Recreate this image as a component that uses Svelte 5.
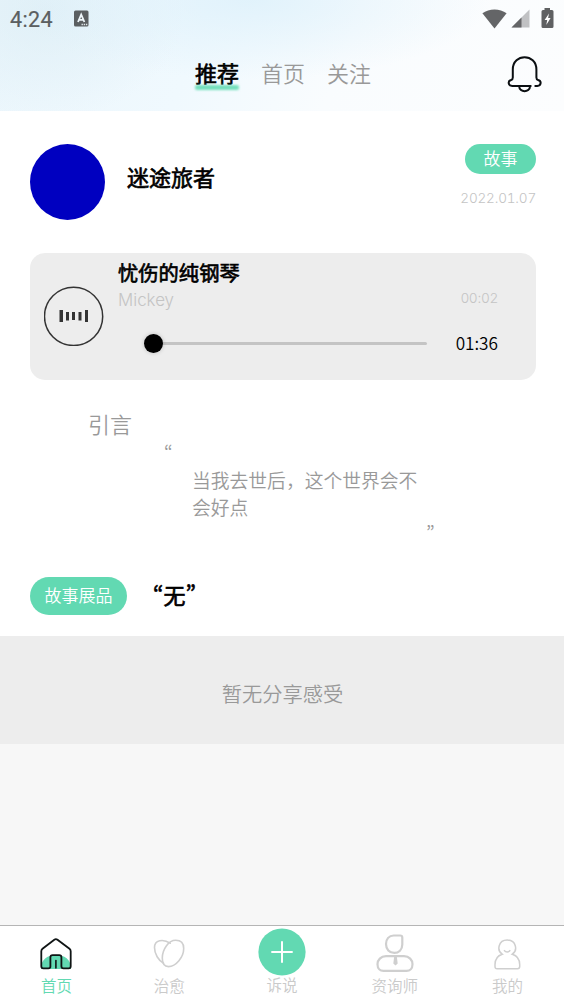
<script>
	// Header tabs
	const tabs = ["推荐", "首页", "关注"];
	let activeTab = "推荐";

	// Bottom navigation
	const navItems = [
		{ id: "home", label: "首页" },
		{ id: "heal", label: "治愈" },
		{ id: "tell", label: "诉说" },
		{ id: "adviser", label: "资询师" },
		{ id: "mine", label: "我的" },
	];
	let activeNav = "home";

	// Story shown on the page
	const story = {
		author: "迷途旅者",
		tag: "故事",
		date: "2022.01.07",
		intro: "当我去世后，这个世界会不会好点",
		exhibit: "无",
	};

	const song = {
		title: "忧伤的纯钢琴",
		artist: "Mickey",
		current: "00:02",
		total: "01:36",
	};
	let progress = 0;
</script>

<main>
	<header>
		<div class="status">
			<span class="clock">4:24</span>
			<svg class="ime" width="15" height="17" viewBox="0 0 15 17">
				<rect x="0" y="0.5" width="14.5" height="16" rx="1.5" fill="#5b5f61" />
				<path d="M4 12 L7.2 4.6 L10.4 12 M5 9.8 H9.4" fill="none" stroke="#eef6fa" stroke-width="1.8" />
				<path d="M7.5 14.5 H13.5" stroke="#dfe7ea" stroke-width="1.4" stroke-dasharray="1.4 0.8" />
			</svg>
			<div class="signals">
				<svg width="25" height="20" viewBox="0 0 25 20">
					<path d="M0.4 4.2 C7 -0.9 18 -0.9 24.6 4.2 L12.5 19.4 Z" fill="#646567" />
				</svg>
				<svg width="19" height="19" viewBox="0 0 19 19">
					<path d="M0.5 18.5 L18.5 0.5 V18.5 Z" fill="#c0c1c3" />
					<path d="M0.5 18.5 L10.5 8.5 V18.5 Z" fill="#646567" />
				</svg>
				<svg class="battery" width="13" height="20" viewBox="0 0 13 20">
					<path d="M3.5 0 H9 V2 H11 Q12.5 2 12.5 3.5 V18.5 Q12.5 20 11 20 H2 Q0.5 20 0.5 18.5 V3.5 Q0.5 2 2 2 H3.5 Z" fill="#5f6062" />
					<path d="M8 5.5 L3.6 12 H6.2 L5.3 17 L9.6 10 H7.1 Z" fill="#fff" />
				</svg>
			</div>
		</div>
		<div class="topbar">
			<nav class="tabs">
				{#each tabs as tab}
					<button class="tab" class:active={tab === activeTab} on:click={() => (activeTab = tab)}>{tab}</button>
				{/each}
			</nav>
			<svg class="bell" width="36" height="38" viewBox="0 0 36 38" fill="none" stroke="#0b0f12" stroke-width="2" stroke-linecap="round">
				<path d="M23.7 31 H5.2 C0.8 31 0.6 25.6 4.2 24.9 C5.6 24.6 5.8 23.6 5.8 22.4 V14.5 C5.8 -2 29.4 -2 29.4 14.5 V22.4 C29.4 23.6 29.6 24.6 31 24.9 C34.9 25.8 34.3 30.8 30.3 31 H28.3" />
				<path d="M12.2 31.4 C12.4 37.8 22.8 37.8 23 31.4" />
			</svg>
		</div>
	</header>

	<section class="author">
		<div class="avatar"></div>
		<h1>{story.author}</h1>
		<div class="meta">
			<span class="tag">{story.tag}</span>
			<span class="date">{story.date}</span>
		</div>
	</section>

	<section class="music">
		<div class="player">
			<svg class="play" width="60" height="60" viewBox="0 0 60 60">
				<circle cx="29.6" cy="30.4" r="29.1" fill="none" stroke="#333" stroke-width="1.5" />
				<g fill="#333">
					<rect x="15.5" y="24" width="3.5" height="12" />
					<rect x="22" y="26" width="3" height="8.5" />
					<rect x="28" y="26" width="3" height="8" />
					<rect x="34.5" y="26" width="3" height="8.5" />
					<rect x="41" y="24" width="3" height="12" />
				</g>
			</svg>
			<div class="track">
				<h2>{song.title}</h2>
				<div class="line">
					<span class="artist">{song.artist}</span>
					<span class="current">{song.current}</span>
				</div>
				<div class="line seek">
					<div class="slider">
						<div class="knob" style="left: {progress}%"></div>
					</div>
					<span class="total">{song.total}</span>
				</div>
			</div>
		</div>
	</section>

	<section class="intro">
		<h3>引言</h3>
		<div class="quote open">“</div>
		<p>{story.intro}</p>
		<div class="quote close">”</div>
	</section>

	<section class="exhibit">
		<span class="badge">故事展品</span>
		<strong>“{story.exhibit}”</strong>
	</section>

	<section class="empty">暂无分享感受</section>

	<footer>
		{#each navItems as item}
			<button class="item {item.id}" class:active={item.id === activeNav} on:click={() => (activeNav = item.id)}>
				<span class="icon">
					{#if item.id === "home"}
						<svg width="34" height="34" viewBox="0 0 34 34">
							<path d="M2 32 C1 13 33 13 32 32 Z" fill="#62d9b2" />
							<path d="M11.4 29.5 V20.3 Q11.4 18.1 13.6 18.1 H20.2 Q22.4 18.1 22.4 20.3 V29.2 Q22.4 31.3 24.5 31.3 H29.6 Q31.7 31.3 31.7 29.2 V14.3 Q31.7 12.8 30.5 11.8 L18.5 2.7 Q16.9 1.5 15.3 2.7 L3.5 11.8 Q2.3 12.8 2.3 14.3 V29.2 Q2.3 31.3 4.4 31.3 H9.3 Q11.4 31.3 11.4 29.5" fill="none" stroke="#101515" stroke-width="1.8" />
							<path d="M16.9 23.5 V31" stroke="#101515" stroke-width="1.6" stroke-linecap="round" />
						</svg>
					{:else if item.id === "heal"}
						<svg width="32" height="30" viewBox="0 0 32 30" fill="none" stroke="#cfcfcf" stroke-width="1.6">
							<path d="M10.5 24.2 C5.5 21.5 1.5 15 1.5 8.5 C1.5 1 10 -0.5 17.2 4.2" stroke-linecap="round" />
							<path d="M15.5 27.6 C11.5 27.6 9.3 24 9.3 19 C9.3 10.5 15.5 1.3 22.7 1.3 C28.5 1.3 30.7 5 30.7 9.5 C30.7 18 23 27.6 15.5 27.6 Z" />
						</svg>
					{:else if item.id === "tell"}
						<svg width="48" height="48" viewBox="0 0 48 48">
							<circle cx="24" cy="24" r="23.6" fill="#62d9b2" />
							<path d="M13.3 24 H34.7 M24 13.3 V34.7" stroke="#fff" stroke-width="2" />
						</svg>
					{:else if item.id === "adviser"}
						<svg width="38" height="38" viewBox="0 0 38 38" fill="none" stroke="#cfcfcf" stroke-width="2.2">
							<path d="M17.7 1.5 H24.2 Q26.3 1.5 26.3 3.7 V10.5 C26.3 15.8 22.7 18.9 18.3 18.9 C13.4 18.9 10 15.3 10 10 C10 5 13 1.5 17.7 1.5 Z" />
							<path d="M10 22.2 H28 C33.2 22.2 36.5 26 36.5 30.2 C36.5 34.7 33.8 36.9 30.5 36.9 H7.5 C4.2 36.9 1.5 34.7 1.5 30.2 C1.5 26 4.8 22.2 10 22.2 Z" />
							<path d="M18.2 22.5 H20.8 L21.7 29.5 L19.5 31.5 L17.3 29.5 Z" fill="#cfcfcf" stroke="none" />
						</svg>
					{:else}
						<svg width="27" height="31" viewBox="0 0 27 31" fill="none" stroke="#cfcfcf" stroke-width="1.5">
							<path d="M8.2 15.2 C2.5 11.5 4.3 1.1 13.2 1.1 C22.2 1.1 24 11.5 18.3 15.2 C23.5 16.8 25.7 20.5 25.7 25.5 V27.6 Q25.7 29.8 23.5 29.8 H3.2 Q1 29.8 1 27.6 V25.5 C1 20.5 3.2 16.8 8.2 15.2 Z" />
							<path d="M10 11.2 Q13.1 14.7 16.3 11.2" />
						</svg>
					{/if}
				</span>
				<span class="label">{item.label}</span>
			</button>
		{/each}
	</footer>
</main>

<style>
	:global(body) {
		margin: 0;
	}

	* {
		box-sizing: border-box;
	}

	main {
		display: flex;
		flex-direction: column;
		width: 564px;
		height: 1004px;
		overflow: hidden;
		background: #f7f7f7;
		color: #000;
		font-family: "Noto Sans CJK SC", sans-serif;
		font-weight: 350;
	}

	h1, h2, h3, p {
		margin: 0;
	}

	h1, h2, .exhibit strong, .tab.active {
		font-weight: 400;
		-webkit-text-stroke: 0.65px #000;
	}

	svg {
		display: block;
	}

	button {
		padding: 0;
		border: none;
		background: none;
		font-family: inherit;
		font-weight: inherit;
	}

	header {
		height: 111px;
		background:
			radial-gradient(ellipse 240px 80px at 250px 0, rgba(222, 241, 251, 0.85), rgba(222, 241, 251, 0)),
			radial-gradient(ellipse 140px 110px at 45px 10px, rgba(216, 235, 243, 0.6), rgba(216, 235, 243, 0)),
			linear-gradient(110deg, #ebf6fc 0%, #f0f9fe 35%, #f9fcfe 60%, #fcfdfe 100%);
	}

	.status {
		display: flex;
		align-items: center;
		height: 37px;
		padding: 0 10px 0 10px;
	}

	.clock {
		width: 64px;
		font: 400 21.5px/38px Roboto, sans-serif;
		letter-spacing: 0.4px;
		color: #5b5f61;
		padding-top: 2px;
		-webkit-text-stroke: 0.2px #5b5f61;
	}

	.signals {
		display: flex;
		align-items: center;
		gap: 4px;
		margin-left: auto;
	}

	.battery {
		margin: 0 0 1px 7px;
	}

	.topbar {
		display: flex;
		align-items: center;
		justify-content: space-between;
		height: 73px;
		padding: 0 21px 0 195px;
	}

	.tabs {
		display: flex;
		gap: 22px;
	}

	.tab {
		height: 34px;
		font-size: 22px;
		line-height: 30px;
		padding-bottom: 4px;
		color: #999;
	}

	.tab.active {
		position: relative;
		color: #000;
	}

	.tab.active::after {
		content: "";
		position: absolute;
		left: 0;
		right: 0;
		bottom: 1px;
		height: 5px;
		border-radius: 2px;
		background: #75e0bd;
		filter: blur(1px);
	}

	.author {
		display: flex;
		height: 142px;
		padding: 33px 28px 0 30px;
		background: #fff;
	}

	.avatar {
		width: 75px;
		height: 76px;
		border-radius: 50%;
		background: #0000c0;
	}

	h1 {
		margin: 16px 0 0 22px;
		font-size: 22px;
		line-height: 32px;
	}

	.meta {
		display: flex;
		flex-direction: column;
		align-items: flex-end;
		margin-left: auto;
	}

	.tag {
		width: 71px;
		height: 30px;
		border-radius: 15px;
		background: #62d9b2;
		color: #fff;
		font-size: 17px;
		line-height: 28px;
		text-align: center;
	}

	.date {
		margin-top: 14px;
		font: 300 13.6px/20px Inter, sans-serif;
		font-feature-settings: "tnum";
		letter-spacing: -0.2px;
		color: #c4c4c4;
	}

	.music {
		padding: 0 28px 0 30px;
		background: #fff;
	}

	.player {
		display: flex;
		height: 127px;
		padding: 0 38px 0 14px;
		border-radius: 15px;
		background: #ededed;
	}

	.play {
		margin-top: 33px;
	}

	.track {
		flex: 1;
		margin-left: 14px;
	}

	h2 {
		margin-top: 4px;
		font-size: 20.3px;
		line-height: 30px;
	}

	.line {
		display: flex;
		align-items: center;
		justify-content: space-between;
		height: 26px;
		font-family: Inter, sans-serif;
		font-weight: 300;
		color: #c4c4c4;
	}

	.artist {
		font-size: 16.9px;
	}

	.current {
		font-size: 13.6px;
		font-feature-settings: "calt" 0;
		padding-bottom: 5px;
	}

	.seek {
		height: 30px;
		margin-top: 15px;
		padding-left: 35px;
	}

	.slider {
		position: relative;
		width: 274px;
		height: 3px;
		border-radius: 2px;
		background: #c4c4c4;
	}

	.knob {
		position: absolute;
		top: -8px;
		width: 19px;
		height: 19px;
		margin-left: -9.5px;
		border-radius: 50%;
		background: #000;
		box-shadow: 0 0 4px rgba(0, 0, 0, 0.2);
	}

	.total {
		font-family: "Noto Sans CJK SC", sans-serif;
		font-size: 17.2px;
		font-weight: 350;
		line-height: 24px;
		padding-bottom: 1px;
		color: #000;
	}

	.intro {
		height: 197px;
		padding: 27px 0 0 88px;
		background: #fff;
		color: #999;
	}

	h3 {
		font-size: 22px;
		line-height: 32px;
		font-weight: inherit;
	}

	.quote {
		height: 28px;
		font-size: 19px;
		line-height: 28px;
		font-feature-settings: "pwid";
	}

	.open {
		padding-left: 76px;
	}

	.close {
		padding-left: 338px;
		line-height: 27px;
	}

	.intro p {
		width: 228px;
		margin-left: 104px;
		font-size: 18.8px;
		line-height: 26.5px;
	}

	.exhibit {
		display: flex;
		height: 59px;
		padding-left: 30px;
		background: #fff;
	}

	.badge {
		width: 97px;
		height: 38px;
		border-radius: 19px;
		background: #62d9b2;
		color: #fff;
		font-size: 17px;
		line-height: 36px;
		text-align: center;
	}

	.exhibit strong {
		margin-left: 26px;
		font-size: 22px;
		line-height: 35px;
		font-feature-settings: "pwid";
	}

	.empty {
		height: 108px;
		background: #ededed;
		color: #999;
		font-size: 20.3px;
		line-height: 114px;
		text-align: center;
		padding-left: 1px;
	}

	footer {
		display: grid;
		grid-template-columns: repeat(5, 1fr);
		height: 79px;
		margin-top: auto;
		border-top: 1px solid #b5b5b5;
		background: #fff;
	}

	.item {
		display: flex;
		flex-direction: column;
		align-items: center;
		color: #cacaca;
		font-size: 15.5px;
	}

	.item.active {
		color: #62d9b2;
	}

	.icon {
		display: flex;
		align-items: center;
		height: 49px;
		margin-top: 2px;
	}

	.tell .icon {
		height: 48px;
	}

	.home .icon,
	.heal .icon,
	.mine .icon {
		padding-top: 3px;
	}

	.label {
		line-height: 16px;
	}
</style>
